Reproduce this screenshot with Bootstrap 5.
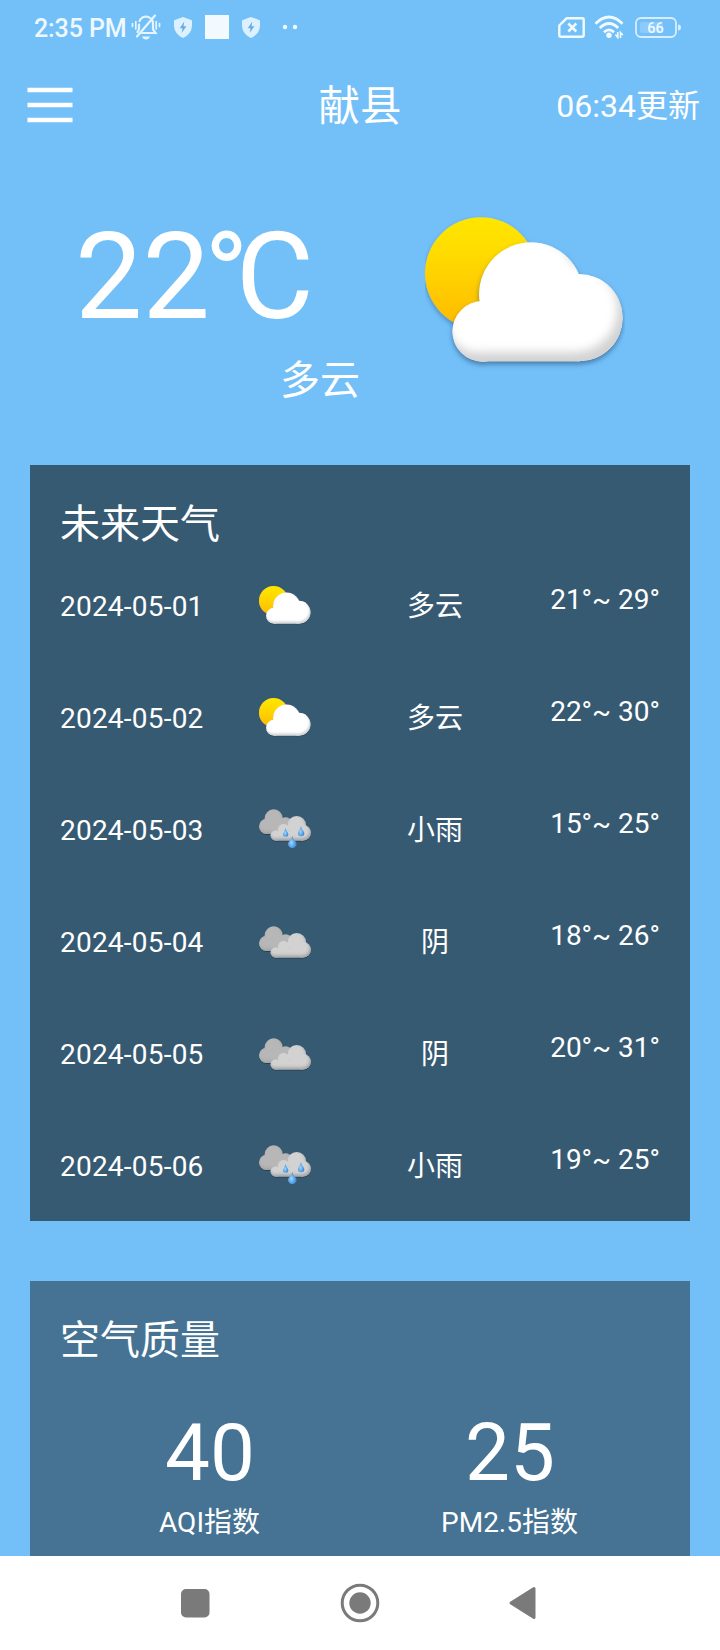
<!DOCTYPE html>
<html lang="zh-CN">
<head>
<meta charset="utf-8">
<meta name="viewport" content="width=device-width, initial-scale=1">
<title>献县天气</title>
<link href="https://cdn.jsdelivr.net/npm/bootstrap@5.3.0/dist/css/bootstrap.min.css" rel="stylesheet">
<style>
  body { font-family: Roboto, "Noto Sans CJK SC", sans-serif; background: #73c0f9; color: #fff; }
  .phone { width: 720px; height: 1650px; }
  .status-bar { height: 54px; color: #eef8ff; }
  .clock { font-size: 25px; font-weight: 500; line-height: 30px; width: 93px; margin-left: 34px; letter-spacing: -.1px; }
  .top-bar { height: 101px; padding: 0 20px 0 27px; }
  .city { font-size: 41.5px; line-height: 50px; padding-top: 5px; margin-right: 7px; }
  .updated { font-size: 32px; line-height: 38px; padding-top: 2px; }
  .now { height: 310px; }
  .now-text { width: 360px; padding-top: 52px; }
  .now-temp { font-size: 120px; line-height: 140px; height: 140px; padding-left: 75px; }
  .tight { letter-spacing: -6px; }
  .degree { letter-spacing: -13px; }
  .now-cond { font-size: 40px; line-height: 48px; height: 48px; margin-top: 10px; }
  .now-icon { width: 200px; height: 200px; margin: 39px 0 0 65px; }
  .panel { margin: 0 30px; padding: 0 30px; }
  .panel-forecast { background: #375a73; height: 756px; }
  .panel-air { background: #467394; height: 275px; margin-top: 60px; }
  .panel-title { font-size: 40px; line-height: 48px; height: 84px; padding-top: 36px; margin: 0; font-weight: 400; }
  .day { height: 112px; font-size: 28px; line-height: 33px; padding-top: 31px; }
  .day .cell { width: 150px; }
  .date { letter-spacing: .22px; }
  .drop { margin-top: 10px; }
  .temps { margin-top: 3px; }
  .air-value { font-size: 80px; line-height: 94px; height: 94px; margin-top: 41px; }
  .air-label { font-size: 28px; line-height: 33px; margin-top: 6px; height: 33px; padding-right: 1px; }
  .nav-keys { height: 94px; }
  svg { display: block; flex: none; }
</style>
</head>
<body>
<svg width="0" height="0" class="position-absolute" aria-hidden="true">
  <defs>
    <linearGradient id="sunFill" x1="0" y1="0" x2="0" y2="1"><stop offset="0" stop-color="#ffe600"/><stop offset=".3" stop-color="#ffdc00"/><stop offset="1" stop-color="#ffb900"/></linearGradient>
    <radialGradient id="waterFill" cx=".4" cy=".55" r=".6"><stop offset="0" stop-color="#9fd4fb"/><stop offset="1" stop-color="#2f86d8"/></radialGradient>
    <filter id="puff" x="-20%" y="-20%" width="140%" height="150%" color-interpolation-filters="sRGB">
      <feGaussianBlur in="SourceAlpha" stdDeviation="15"/><feOffset dx="-15" dy="-28" result="o"/>
      <feFlood flood-color="#d2d2d2"/><feComposite in2="SourceAlpha" operator="in"/><feComposite in2="o" operator="out" result="shade"/>
      <feGaussianBlur in="SourceAlpha" stdDeviation="8"/><feOffset dy="10" result="b"/>
      <feFlood flood-color="#1c3c5c" flood-opacity=".5"/><feComposite in2="b" operator="in" result="ds"/>
      <feMerge><feMergeNode in="ds"/><feMergeNode in="SourceGraphic"/><feMergeNode in="shade"/></feMerge>
    </filter>
    <filter id="puffSmall" x="-20%" y="-20%" width="140%" height="150%" color-interpolation-filters="sRGB">
      <feGaussianBlur in="SourceAlpha" stdDeviation="4"/><feOffset dx="-2" dy="-6" result="o"/>
      <feFlood flood-color="#a2a2a2"/><feComposite in2="SourceAlpha" operator="in"/><feComposite in2="o" operator="out" result="shade"/>
      <feGaussianBlur in="SourceAlpha" stdDeviation="2"/><feOffset dy="3" result="b"/>
      <feFlood flood-color="#14283a" flood-opacity=".5"/><feComposite in2="b" operator="in" result="ds"/>
      <feMerge><feMergeNode in="ds"/><feMergeNode in="SourceGraphic"/><feMergeNode in="shade"/></feMerge>
    </filter>
    <filter id="sunGlow" x="-20%" y="-20%" width="140%" height="140%"><feDropShadow dx="0" dy="8" stdDeviation="8" flood-color="#1c3c5c" flood-opacity=".4"/></filter>
    <symbol id="partly" viewBox="75 -18 600 600">
      <circle cx="243" cy="220" r="168" fill="url(#sunFill)" filter="url(#sunGlow)"/>
      <g fill="#fff" filter="url(#puff)"><circle cx="393" cy="283" r="156"/><circle cx="537" cy="353" r="131"/><circle cx="248" cy="394" r="91"/><path d="M248 350H537V484H248Z"/></g>
    </symbol>
    <g id="greyClouds">
      <g fill="#b7b7b7" filter="url(#puffSmall)"><circle cx="101" cy="436" r="27"/><circle cx="80" cy="460" r="23"/><circle cx="137" cy="453" r="20"/><path d="M80 445H150V483H80Z"/></g>
      <g fill="#d2d2d2" filter="url(#puffSmall)"><circle cx="170" cy="457" r="28"/><circle cx="189" cy="479" r="23.5"/><circle cx="107" cy="487" r="15.5"/><circle cx="131" cy="471" r="18.5"/><path d="M107 475H189V502.500H107Z"/></g>
    </g>
    <symbol id="overcast" viewBox="57 378 156 156"><use href="#greyClouds"/></symbol>
    <symbol id="rain" viewBox="57 393 156 156">
      <use href="#greyClouds"/>
      <g fill="url(#waterFill)"><path d="M137 465C139 474 145 479 145 484A8 7.500 0 0 1 129 484C129 479 135 474 137 465Z"/><path d="M183 459C185 470 193 475 193 481A9.500 9 0 0 1 174 481C174 475 181 470 183 459Z"/><path d="M157 489C159 500 170 506 170 513A13 12 0 0 1 144 513C144 506 155 500 157 489Z"/></g>
    </symbol>
    <symbol id="shield" viewBox="0 0 18 21"><path fill="#dcf1ff" d="M9 0 17.200 3Q18 3.200 18 4V9Q17.500 17 9 21Q.5 17 0 9V4Q0 3.200.8 3Z"/><path fill="#69abe0" d="M10.300 4.500 5.800 11.200H8.600L7.600 16 12.400 9.300H9.500Z"/></symbol>
  </defs>
</svg>

<main class="phone d-flex flex-column overflow-hidden">
  <div class="status-bar d-flex align-items-center">
    <div class="clock text-nowrap mt-1">2:35 PM</div>
    <svg width="30" height="28" viewBox="0 0 30 28" fill="none" stroke="#e5f5ff" stroke-width="2.200" stroke-linecap="round" style="margin-left:4px"><path d="M11 20H24.500L22 16.500V10.500A7 7 0 0 0 8.500 8M8 11.500V16.500L6.500 19M6 23.500 24 2.500"/><path stroke-width="1.700" d="M1.500 10.500V13.500M4.800 8.500V16M25.200 8.500V16M28.500 10.500V13.500"/><path d="M11 23.500H19Q18 26.500 15 26.500T11 23.500Z" fill="#e5f5ff" stroke="none"/></svg>
    <svg width="18" height="21" style="margin-left:13px"><use href="#shield"/></svg>
    <svg width="24" height="24" style="margin-left:13px"><rect width="24" height="24" fill="#f2f9ff"/></svg>
    <svg width="18" height="21" style="margin-left:13px"><use href="#shield"/></svg>
    <svg width="16" height="6" style="margin-left:22px"><circle cx="3" cy="3" r="2.200" fill="#f0f9ff"/><circle cx="13" cy="3" r="2.200" fill="#f0f9ff"/></svg>
    <svg class="ms-auto" width="27" height="22" viewBox="0 -1 27 22" fill="none" stroke="#f2faff"><path stroke-width="2.400" stroke-linejoin="round" d="M8.500 1.300H24.500Q25.700 1.300 25.700 2.500V18.500Q25.700 19.700 24.500 19.700H2.500Q1.300 19.700 1.300 18.500V8.500Z"/><path stroke-width="2.500" d="M10.300 6.500 18.300 14.500M18.300 6.500 10.300 14.500"/></svg>
    <svg width="31" height="24" viewBox="0 0 31 24" fill="none" stroke="#f2faff" stroke-width="2.800" style="margin-left:9px"><path d="M1.500 8.700Q15 -4.500 28.500 8.700M5.800 13Q15 4 24.200 13M10 17.200Q15 12.500 20 17.200"/><circle cx="15" cy="20.300" r="2.700" fill="#f2faff" stroke="none"/><path stroke-width="1.600" d="M21.500 19.500 23.800 22.500V17M26.500 23V17.500L28.800 20"/></svg>
    <svg width="47" height="21" viewBox="0 0 47 21" style="margin:0 38px 0 10px"><rect x="1" y="1" width="40" height="19" rx="5" fill="none" stroke="#d6eeff" stroke-width="1.800"/><rect x="5" y="5" width="23" height="11" rx="2" fill="#8bcafb"/><path d="M43 7.500Q46 7.500 46 10.500T43 13.500Z" fill="#d6eeff"/><text x="20.500" y="15.600" text-anchor="middle" font-size="14.500" font-weight="500" fill="#f2faff">66</text></svg>
  </div>

  <header class="top-bar row g-0 align-items-center">
    <div class="col-3"><svg width="46" height="37" viewBox="0 0 46 37"><path stroke="#fff" stroke-width="4.600" d="M.5 4H45.500M.5 19H45.500M.5 34H45.500"/></svg></div>
    <div class="col-6 d-flex justify-content-center"><div class="city">献县</div></div>
    <div class="col-3 d-flex justify-content-end"><div class="updated text-nowrap">06:34更新</div></div>
  </header>

  <section class="now d-flex">
    <div class="now-text"><div class="now-temp text-nowrap">2<span class="tight">2</span><span class="degree">°</span>C</div><div class="now-cond text-end">多云</div></div>
    <svg class="now-icon"><use href="#partly"/></svg>
  </section>

  <section class="panel panel-forecast">
    <h2 class="panel-title">未来天气</h2>
    <div class="day d-flex"><div class="cell date drop text-nowrap">2024-05-01</div><div class="cell"><svg class="mx-auto" width="52" height="52"><use href="#partly"/></svg></div><div class="cell drop text-center">多云</div><div class="cell temps text-end text-nowrap">21°~ 29°</div></div>
    <div class="day d-flex"><div class="cell date drop text-nowrap">2024-05-02</div><div class="cell"><svg class="mx-auto" width="52" height="52"><use href="#partly"/></svg></div><div class="cell drop text-center">多云</div><div class="cell temps text-end text-nowrap">22°~ 30°</div></div>
    <div class="day d-flex"><div class="cell date drop text-nowrap">2024-05-03</div><div class="cell"><svg class="mx-auto" width="52" height="52"><use href="#rain"/></svg></div><div class="cell drop text-center">小雨</div><div class="cell temps text-end text-nowrap">15°~ 25°</div></div>
    <div class="day d-flex"><div class="cell date drop text-nowrap">2024-05-04</div><div class="cell"><svg class="mx-auto" width="52" height="52"><use href="#overcast"/></svg></div><div class="cell drop text-center">阴</div><div class="cell temps text-end text-nowrap">18°~ 26°</div></div>
    <div class="day d-flex"><div class="cell date drop text-nowrap">2024-05-05</div><div class="cell"><svg class="mx-auto" width="52" height="52"><use href="#overcast"/></svg></div><div class="cell drop text-center">阴</div><div class="cell temps text-end text-nowrap">20°~ 31°</div></div>
    <div class="day d-flex"><div class="cell date drop text-nowrap">2024-05-06</div><div class="cell"><svg class="mx-auto" width="52" height="52"><use href="#rain"/></svg></div><div class="cell drop text-center">小雨</div><div class="cell temps text-end text-nowrap">19°~ 25°</div></div>
  </section>

  <section class="panel panel-air">
    <h2 class="panel-title">空气质量</h2>
    <div class="row g-0 text-center">
      <div class="col-6"><div class="air-value">40</div><div class="air-label">AQI指数</div></div>
      <div class="col-6"><div class="air-value">25</div><div class="air-label">PM2.5指数</div></div>
    </div>
  </section>

  <nav class="nav-keys bg-white d-flex align-items-center" aria-label="系统导航">
    <svg width="29" height="29" style="margin-left:181px"><rect width="28.500" height="28.500" rx="5" fill="#7a7a7a"/></svg>
    <svg width="40" height="40" style="margin-left:130px"><circle cx="20" cy="20" r="17.800" fill="none" stroke="#7a7a7a" stroke-width="3"/><circle cx="20" cy="20" r="10.700" fill="#7a7a7a"/></svg>
    <svg width="28" height="34" style="margin-left:129px"><path d="M2 17 25 2.500V31.500Z" fill="#7a7a7a" stroke="#7a7a7a" stroke-width="3" stroke-linejoin="round"/></svg>
  </nav>
</main>
<script src="https://cdn.jsdelivr.net/npm/bootstrap@5.3.0/dist/js/bootstrap.bundle.min.js"></script>
</body>
</html>
